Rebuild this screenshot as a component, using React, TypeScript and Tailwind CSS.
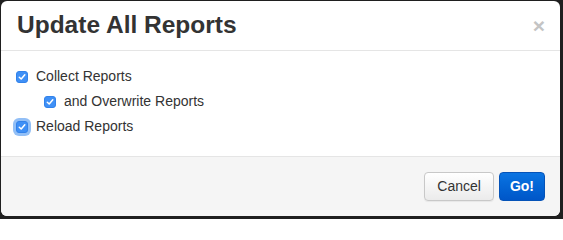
import React from "react";

function Check({ focus }: { focus?: boolean }) {
  return (
    <span
      className={
        "flex h-[12px] w-[12px] shrink-0 items-center justify-center rounded-[3px] bg-[#3f90f6] border border-[#3282ea] " +
        (focus ? "ring-[3px] ring-[#92bff6]" : "")
      }
    >
      <svg width="8" height="8" viewBox="0 0 8 8" fill="none">
        <path d="M1.3 4.2 L3.2 6 L6.8 1.8" stroke="white" strokeWidth="1.5" strokeLinecap="round" strokeLinejoin="round" />
      </svg>
    </span>
  );
}

export default function App() {
  return (
    <div
      className="w-[563px] h-[219px] bg-[#1f1f1f] pt-px pl-px"
      style={{ fontFamily: '"Liberation Sans", Arial, sans-serif' }}
    >
      <div className="flex h-[215px] w-[559px] flex-col overflow-hidden rounded-[6px] bg-white text-[#333]">
        <div className="flex h-[50px] shrink-0 items-center justify-between border-b border-[#e5e5e5] pl-[16px] pr-[15px] pb-px">
          <h1 className="text-[24.5px] font-bold leading-none text-[#333]">Update All Reports</h1>
          <span className="text-[21px] font-bold leading-none text-[#c4c4c4]">×</span>
        </div>
        <div className="flex flex-1 flex-col pl-[15px] pt-[13px] text-[14px]">
          <div className="flex h-[25px] items-center gap-[8px]">
            <Check />
            <span>Collect Reports</span>
          </div>
          <div className="flex h-[25px] items-center gap-[8px] pl-[28px]">
            <Check />
            <span>and Overwrite Reports</span>
          </div>
          <div className="flex h-[25px] items-center gap-[8px]">
            <Check focus />
            <span>Reload Reports</span>
          </div>
        </div>
        <div className="flex h-[60px] shrink-0 items-center justify-end gap-[5px] border-t border-[#e5e5e5] bg-[#f5f5f5] pr-[15px]">
          <button className="h-[29px] rounded-[4px] border border-[#c8c8c8] bg-gradient-to-b from-white to-[#ebebeb] px-[12px] text-[14px] text-[#333] shadow-[0_1px_1px_rgba(0,0,0,0.06)]">
            Cancel
          </button>
          <button className="h-[29px] rounded-[4px] border border-[#0553b8] bg-gradient-to-b from-[#0b74e2] to-[#0056c8] px-[10px] text-[14px] font-bold text-white">
            Go!
          </button>
        </div>
      </div>
    </div>
  );
}
